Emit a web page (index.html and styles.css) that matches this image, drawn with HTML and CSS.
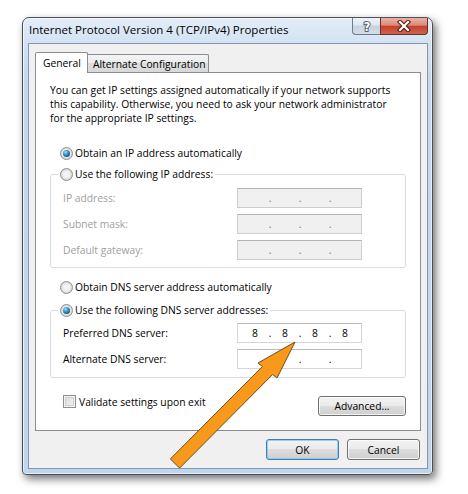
FILE: index.html
```html
<!DOCTYPE html>
<html>
<head>
<meta charset="utf-8">
<link rel="stylesheet" href="styles.css">
</head>
<body>
<div class="window">
  <div class="titlebar">
    <div class="title">Internet Protocol Version 4 (TCP/IPv4) Properties</div>
    <div class="caption-buttons">
      <div class="cbtn help">
        <svg width="12" height="14" viewBox="0 0 12 14"><text x="6" y="11.5" text-anchor="middle" class="help-glyph">?</text></svg>
      </div>
      <div class="cbtn close">
        <svg width="14" height="12" viewBox="0 0 14 12">
          <path d="M3 2 L11 10 M11 2 L3 10" stroke="#4a1a12" stroke-width="4.2" stroke-linecap="square" fill="none"/>
          <path d="M3 2 L11 10 M11 2 L3 10" stroke="#ffffff" stroke-width="2.2" stroke-linecap="square" fill="none"/>
        </svg>
      </div>
    </div>
  </div>
  <div class="client">
    <div class="tabs">
      <div class="tab selected">General</div>
      <div class="tab alt">Alternate Configuration</div>
    </div>
    <div class="panel">
      <p class="intro">You can get IP settings assigned automatically if your network supports<br>this capability. Otherwise, you need to ask your network administrator<br>for the appropriate IP settings.</p>

      <div class="option first"><span class="radio checked"></span><span>Obtain an IP address automatically</span></div>

      <fieldset class="group ip">
        <legend class="option"><span class="radio"></span><span>Use the following IP address:</span></legend>
        <div class="fields">
          <span class="label disabled">IP address:</span>
          <div class="ipbox disabled"><span class="oct"></span><span class="dot">.</span><span class="oct"></span><span class="dot">.</span><span class="oct"></span><span class="dot">.</span><span class="oct"></span></div>
          <span class="label disabled">Subnet mask:</span>
          <div class="ipbox disabled"><span class="oct"></span><span class="dot">.</span><span class="oct"></span><span class="dot">.</span><span class="oct"></span><span class="dot">.</span><span class="oct"></span></div>
          <span class="label disabled">Default gateway:</span>
          <div class="ipbox disabled"><span class="oct"></span><span class="dot">.</span><span class="oct"></span><span class="dot">.</span><span class="oct"></span><span class="dot">.</span><span class="oct"></span></div>
        </div>
      </fieldset>

      <div class="option dns"><span class="radio"></span><span>Obtain DNS server address automatically</span></div>

      <fieldset class="group dnsgroup">
        <legend class="option"><span class="radio checked"></span><span>Use the following DNS server addresses:</span></legend>
        <div class="fields">
          <span class="label">Preferred DNS server:</span>
          <div class="ipbox"><span class="oct">8</span><span class="dot">.</span><span class="oct">8</span><span class="dot">.</span><span class="oct">8</span><span class="dot">.</span><span class="oct">8</span></div>
          <span class="label">Alternate DNS server:</span>
          <div class="ipbox"><span class="oct"></span><span class="dot">.</span><span class="oct"></span><span class="dot">.</span><span class="oct"></span><span class="dot">.</span><span class="oct"></span></div>
        </div>
      </fieldset>

      <div class="validate-row">
        <div class="check"><span class="checkbox"></span><span>Validate settings upon exit</span></div>
        <button class="btn advanced">Advanced...</button>
      </div>
    </div>
    <div class="dialog-buttons">
      <button class="btn default">OK</button>
      <button class="btn">Cancel</button>
    </div>
  </div>
</div>
<svg class="arrow" width="468" height="494" viewBox="0 0 468 494">
  <polygon points="295,342 277,378 272.6,374.5 179.6,468.1 170.4,458.9 262.4,366.5 258,363" fill="#f8991c" stroke="#6e4e1a" stroke-width="1" stroke-linejoin="miter"/>
</svg>
</body>
</html>
```
FILE: styles.css
```css
* { box-sizing: border-box; }

body {
  margin: 0;
  width: 468px;
  height: 494px;
  overflow: hidden;
  position: relative;
  background: #ffffff;
  font-family: "Open Sans", "Noto Sans", sans-serif;
  font-size: 10.3px;
  color: #000;
}

.window {
  margin: 17px 0 0 22px;
  width: 411px;
  height: 458px;
  border: 1px solid #4b5056;
  border-radius: 7px 7px 4px 4px;
  background: linear-gradient(#e3edf8, #d2e2f3 26px, #c4d9ef 60px, #bfd5ed);
  padding: 0 4px 5px 5px;
  box-shadow: 3px 4px 9px rgba(0, 0, 0, 0.55), inset 0 0 0 1px rgba(255, 255, 255, 0.6);
  display: flex;
  flex-direction: column;
}

.titlebar {
  height: 25px;
  flex: none;
  display: flex;
  justify-content: space-between;
  align-items: flex-start;
}

.title {
  font-size: 11.5px;
  line-height: 14px;
  padding: 5px 0 0 1px;
  white-space: nowrap;
}

.caption-buttons {
  display: flex;
}

.cbtn {
  height: 17px;
  display: flex;
  align-items: center;
  justify-content: center;
  border: 1px solid #6f7c8b;
  border-top: none;
}

.help {
  width: 28px;
  border-right: none;
  border-radius: 0 0 0 4px;
  background: linear-gradient(#eef3f8, #dde6ef 45%, #c5d2df 50%, #d3dde8);
}

.help-glyph {
  font-family: "DejaVu Sans", sans-serif;
  font-size: 12px;
  font-weight: bold;
  fill: #ffffff;
  stroke: #3b4856;
  stroke-width: 1.6px;
  paint-order: stroke fill;
}

.close {
  width: 48px;
  border-color: #6e2e24;
  border-radius: 0 0 4px 0;
  background: linear-gradient(#e9b3a6, #db8a78 45%, #c4412c 52%, #cf644c);
}

.client {
  flex: 1;
  border: 1px solid #8497ae;
  background: #f0f0f0;
  padding: 8px 6px;
  display: flex;
  flex-direction: column;
}

.tabs {
  display: flex;
  align-items: flex-end;
  height: 20px;
  flex: none;
  position: relative;
  z-index: 1;
}

.tab {
  border: 1px solid #898c95;
  border-bottom: none;
  border-radius: 2px 2px 0 0;
  line-height: 14px;
  white-space: nowrap;
}

.tab.selected {
  width: 53px;
  height: 21px;
  margin-bottom: -1px;
  background: #ffffff;
  padding: 3px 0 0 7px;
  position: relative;
  z-index: 2;
}

.tab.alt {
  width: 122px;
  height: 18px;
  margin-left: -1px;
  padding: 2px 0 0 5px;
  background: linear-gradient(#f4f4f4, #ebebeb 50%, #dedede 50%, #d9d9d9);
}

.panel {
  height: 359px;
  flex: none;
  border: 1px solid #898c95;
  background: #ffffff;
  padding: 10px 14px 0;
}

.intro {
  margin: 0;
  line-height: 14px;
  white-space: nowrap;
}

.option {
  display: flex;
  align-items: center;
  height: 14px;
  line-height: 14px;
  white-space: nowrap;
}

.option.first {
  margin: 21px 0 0 10px;
}

.option.dns {
  margin: 12px 0 0 10px;
}

.radio {
  flex: none;
  width: 13px;
  height: 13px;
  margin-right: 2px;
  border-radius: 50%;
  border: 1px solid #8c8e90;
  background: radial-gradient(circle at 50% 50%, #f6f6f6 0, #f1f1f1 40%, #d6d6d6 72%, #ececec 100%);
  display: flex;
  align-items: center;
  justify-content: center;
}

.radio.checked::after {
  content: "";
  width: 7px;
  height: 7px;
  border-radius: 50%;
  background: radial-gradient(circle at 38% 32%, #a6e2f8 0, #46a6d8 30%, #1d5e8c 70%, #173f5e 100%);
}

.group {
  margin: 7px 0 0;
  min-width: 0;
  border: 1px solid #d5dfe5;
  border-radius: 3px;
  padding: 7px 0 7px;
}

.group.dnsgroup {
  margin-top: 9px;
  padding: 6px 0 8px;
}

.group legend {
  margin-left: 7px;
  padding: 0 2px;
}

.fields {
  display: grid;
  grid-template-columns: 174px 125px;
  grid-auto-rows: 20px;
  row-gap: 6px;
  margin-left: 12px;
  align-items: center;
}

.label {
  line-height: 14px;
  white-space: nowrap;
}

.label.disabled {
  color: #a0a0a0;
}

.ipbox {
  height: 20px;
  display: flex;
  align-items: center;
  padding-left: 4px;
  background: #ffffff;
  border: 1px solid #d6d6d6;
  border-top-color: #b9b9b9;
  line-height: 14px;
}

.ipbox.disabled {
  background: #f0f0f0;
  border-color: #cdcdcd;
  border-top-color: #b4b4b4;
  color: #6d6d6d;
}

.oct {
  width: 26px;
  text-align: center;
}

.dot {
  width: 4px;
  text-align: center;
}

.validate-row {
  display: flex;
  justify-content: space-between;
  align-items: flex-start;
  margin-top: 17px;
}

.check {
  display: flex;
  align-items: center;
  height: 13px;
  margin-left: 13px;
  line-height: 14px;
  white-space: nowrap;
}

.checkbox {
  flex: none;
  width: 13px;
  height: 13px;
  margin-right: 3px;
  border: 1px solid #8f8f8f;
  background: linear-gradient(135deg, #d8d8d8, #f6f6f6);
  box-shadow: inset 0 0 0 1px #f4f4f4, inset 0 0 0 2px #d0d0d0;
}

.btn {
  height: 21px;
  padding: 0;
  border: 1px solid #707070;
  border-radius: 3px;
  background: linear-gradient(#f2f2f2, #ebebeb 50%, #dddddd 50%, #cfcfcf);
  box-shadow: inset 0 0 0 1px rgba(255, 255, 255, 0.75);
  font: inherit;
  color: #000;
  line-height: 14px;
}

.btn.advanced {
  width: 88px;
  height: 20px;
  margin-top: 1px;
}

.dialog-buttons {
  display: flex;
  justify-content: flex-end;
  gap: 8px;
  margin-top: 8px;
  margin-right: 1px;
}

.dialog-buttons .btn {
  width: 73px;
}

.btn.default {
  border-color: #3c7fb1;
  box-shadow: inset 0 0 0 1px rgba(120, 200, 240, 0.75);
}

.arrow {
  position: absolute;
  left: 0;
  top: 0;
  pointer-events: none;
}
```
